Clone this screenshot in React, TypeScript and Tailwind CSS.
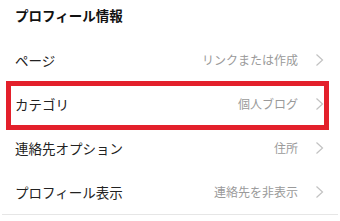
import React from 'react';

const ROWS = [
    { label: 'ページ', value: 'リンクまたは作成' },
    { label: 'カテゴリ', value: '個人ブログ', highlight: true },
    { label: '連絡先オプション', value: '住所' },
    { label: 'プロフィール表示', value: '連絡先を非表示' },
];

const Chevron: React.FC = () => (
    <svg width="9" height="14" viewBox="0 0 9 14" fill="none" className="shrink-0">
        <polyline points="1.5,1.5 7.5,7 1.5,12.5" stroke="#c2c2c2" strokeWidth="1.2" strokeLinejoin="miter" />
    </svg>
);

export default function App() {
    return (
        <div className="w-[340px] h-[221px] bg-white overflow-hidden" style={{ fontFamily: '"Noto Sans CJK JP", "Noto Sans", sans-serif' }}>
            <div className="h-[38px] pt-[6px] pl-[15px]">
                <h2 className="text-[13.5px] leading-[18px] font-bold text-[#111]">プロフィール情報</h2>
            </div>

            <div>
                {ROWS.map((row) => (
                    <div key={row.label} className="relative h-[44px] flex items-center justify-between pl-[15px] pr-[16px]">
                        <span className="text-[13.5px] text-[#222]">{row.label}</span>
                        <div className="flex items-center gap-[17px]">
                            <span className="text-[12px] text-[#9a9a9a]">{row.value}</span>
                            <Chevron />
                        </div>
                        {row.highlight && (
                            <div className="absolute left-[6px] right-[11px] top-[-1px] bottom-[-4px] border-[5px] border-[#e3202b] pointer-events-none" />
                        )}
                    </div>
                ))}
            </div>

            <div className="mx-[2px] h-px bg-[#e6e6e6]" />
        </div>
    );
}
